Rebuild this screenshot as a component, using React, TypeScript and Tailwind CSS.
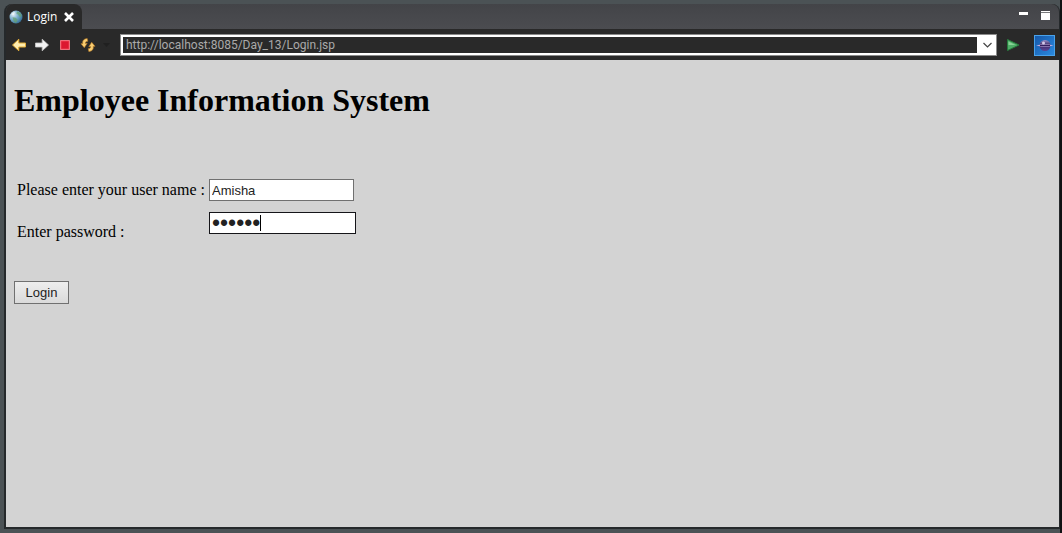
import { useState } from "react";

function GlobeIcon() {
  return (
    <svg width="14" height="14" viewBox="0 0 14 14" aria-hidden="true">
      <defs>
        <radialGradient id="sea" cx="0.3" cy="0.3" r="0.8">
          <stop offset="0" stopColor="#e8f1f6" />
          <stop offset="0.45" stopColor="#7db0cf" />
          <stop offset="1" stopColor="#2f6890" />
        </radialGradient>
      </defs>
      <circle cx="7" cy="7" r="6.5" fill="url(#sea)" />
      <path d="M8 1.2l3 1.3 1.6 2.8-.4 1.7-2-.6-1-1.9-1.8-.4zM3.5 7.2l3.2.5 1.8 1.8-.7 2.6-1.4 1L4.6 11z" fill="#64a06a" opacity="0.7" />
      <path d="M2.3 4.8C3 3 4.300 2.200 6 2L4.900 4.600z" fill="#f4f9fb" opacity="0.8" />
    </svg>
  );
}

function ArrowIcon({ forward = false }: { forward?: boolean }) {
  return (
    <svg width="16" height="16" viewBox="0 0 16 16" aria-hidden="true">
      {forward ? (
        <path d="M1.5 6h6.700V2.200L14.500 8l-6.300 5.800V10H1.500z" fill="#f3f3f3" stroke="#c9c9c9" strokeWidth="0.8" />
      ) : (
        <path d="M14.500 6H7.800V2.200L1.500 8l6.300 5.800V10h6.700z" fill="#ffedb0" stroke="#e4ad36" strokeWidth="1" />
      )}
    </svg>
  );
}

function StopIcon() {
  return (
    <svg width="12" height="12" viewBox="0 0 12 12" aria-hidden="true">
      <rect x="1" y="1" width="10" height="10" rx="1" fill="#f4a1a7" />
      <rect x="2" y="2" width="8" height="8" fill="#dc1830" stroke="#ec3f50" />
    </svg>
  );
}

function RefreshIcon() {
  return (
    <svg width="16" height="16" viewBox="0 0 16 16" aria-hidden="true">
      <g fill="#f8cd72" stroke="#b87a22" strokeWidth="0.6" strokeLinejoin="round">
        <path d="M7.200 1.500C4 1.800 2.200 3.600 2.800 6.600L1 6.700l3.300 4L7.200 6.300 5.400 6.400C5.300 5 6 4.400 7.800 4.300z" />
        <path d="M8.800 14.500c3.200-.3 5-2.100 4.400-5.100l1.800-.1-3.300-4-2.900 4.400 1.800-.1c.1 1.400-.6 2-2.400 2.100z" />
      </g>
    </svg>
  );
}

function EclipseIcon() {
  return (
    <svg width="21" height="21" viewBox="0 0 21 21" aria-hidden="true">
      <defs>
        <linearGradient id="tile" x1="0" y1="0" x2="1" y2="1">
          <stop offset="0" stopColor="#1557a8" />
          <stop offset="1" stopColor="#2b8be0" />
        </linearGradient>
        <linearGradient id="ball" x1="0" y1="0" x2="0" y2="1">
          <stop offset="0" stopColor="#9b8fc6" />
          <stop offset="0.45" stopColor="#3c2b68" />
          <stop offset="1" stopColor="#5a4496" />
        </linearGradient>
      </defs>
      <rect x="0.5" y="0.5" width="20" height="20" fill="url(#tile)" stroke="#49a2ea" />
      <circle cx="11" cy="10.5" r="5.5" fill="url(#ball)" />
      <path d="M2 10.500L7 9.500h8l4.500 1-4.500 1H7z" fill="#c3aee0" />
      <path d="M6 10.500h10" stroke="#34205f" />
      <circle cx="9.500" cy="8" r="1.500" fill="#d5cbea" />
    </svg>
  );
}

export default function App() {
  const [user, setUser] = useState("Amisha");
  const [password, setPassword] = useState("secret");
  const [url, setUrl] = useState("http://localhost:8085/Day_13/Login.jsp");

  return (
    <div className="flex h-screen flex-col border-r-2 border-[#101113] bg-[#4b5255] pt-1 pb-1 pl-1">
      <div className="flex min-h-0 flex-1 flex-col rounded-t-lg border-r border-b-2 border-l-2 border-[#25292b] bg-[#292929]">
        <header className="flex h-[26px] shrink-0 items-stretch justify-between rounded-t-lg border-b border-[#292929] bg-linear-to-b from-[#434448] to-[#4b4c50]">
          <div className="flex w-[76px] items-center gap-1 rounded-t-lg bg-[#292929] pl-[3px] font-['Open_Sans',sans-serif] text-xs text-white">
            <GlobeIcon />
            <span className="w-8">Login</span>
            <button type="button" aria-label="Close tab">
              <svg width="12" height="12" viewBox="0 0 12 12" aria-hidden="true">
                <path d="M2 2l8 8M10 2l-8 8" stroke="#fff" strokeWidth="2.6" />
              </svg>
            </button>
          </div>
          <div className="flex items-start gap-3 pt-1.5 pr-2">
            <button type="button" aria-label="Minimize">
              <svg width="11" height="12" viewBox="0 0 11 12" aria-hidden="true">
                <rect x="1" y="2" width="9" height="3" fill="#fff" />
              </svg>
            </button>
            <button type="button" aria-label="Maximize">
              <svg width="10" height="12" viewBox="0 0 10 12" aria-hidden="true">
                <path d="M0 1h9v9H0z" fill="#fff" />
                <path d="M0 2.500h9" stroke="#77787b" />
              </svg>
            </button>
          </div>
        </header>

        <nav className="flex h-[30px] shrink-0 items-center bg-[#292929] pr-1 pl-[5px]">
          <div className="flex w-[109px] items-center gap-[7px]">
            <button type="button" aria-label="Back"><ArrowIcon /></button>
            <button type="button" aria-label="Forward"><ArrowIcon forward /></button>
            <button type="button" aria-label="Stop" className="px-0.5"><StopIcon /></button>
            <button type="button" aria-label="Refresh"><RefreshIcon /></button>
            <svg width="7" height="4" viewBox="0 0 7 4" aria-hidden="true">
              <path d="M0 0h7L3.500 4z" fill="#202020" />
            </svg>
          </div>
          <div className="flex h-[22px] flex-1 border border-[#8b8b8b] bg-white p-0.5">
            <input
              aria-label="Address"
              value={url}
              onChange={(e) => setUrl(e.target.value)}
              className="min-w-0 flex-1 bg-[#292929] pl-[3px] font-['Roboto',sans-serif] text-xs text-[#aaaaaa] outline-none"
            />
            <button type="button" aria-label="Address history" className="flex w-[17px] items-center justify-center pl-1">
              <svg width="9" height="6" viewBox="0 0 9 6" aria-hidden="true">
                <path d="M.5 1l4 4 4-4" fill="none" stroke="#444" strokeWidth="1.2" />
              </svg>
            </button>
          </div>
          <button type="button" aria-label="Go" className="ml-[9px]">
            <svg width="14" height="14" viewBox="0 0 14 14" aria-hidden="true">
              <path d="M1.500 1.500L13 7 1.500 12.500z" fill="#4fae68" stroke="#267b3c" />
              <path d="M2.500 3.500l7 3.500H2.500z" fill="#89d296" />
            </svg>
          </button>
          <button type="button" aria-label="Open in Eclipse" className="ml-3.5"><EclipseIcon /></button>
        </nav>

        <main className="min-h-0 flex-1 overflow-hidden bg-[#d3d3d3] px-2 pt-5 font-['Liberation_Serif',serif] text-base text-black">
          <h1 className="text-[32px] leading-10 font-bold">Employee Information System</h1>
          <form onSubmit={(e) => e.preventDefault()} className="pt-[58px]">
            <div className="grid grid-cols-[192px_1fr] gap-x-[3px] gap-y-[10px]">
              <label htmlFor="user" className="pl-[3px] leading-6">Please enter your user name :</label>
              <input
                id="user"
                value={user}
                onChange={(e) => setUser(e.target.value)}
                className="mt-px h-[22px] w-[145px] border border-[#707070] bg-white px-0.5 font-['Liberation_Sans',sans-serif] text-[13px] text-[#222222] outline-none"
              />
              <label htmlFor="password" className="self-end pl-[3px] leading-6">Enter password :</label>
              <div className="relative h-8 w-[147px]">
                <input
                  id="password"
                  type="password"
                  value={password}
                  onChange={(e) => setPassword(e.target.value)}
                  className="block h-[22px] w-full border border-[#151519] bg-white px-0.5 font-['Liberation_Sans',sans-serif] text-[23px] leading-5 text-[#222222] outline-none"
                />
                <span className="absolute top-[3px] left-[51px] h-4 w-px bg-black" />
              </div>
            </div>
            <button
              type="submit"
              className="mt-[37px] h-[23px] w-[55px] border border-[#707070] bg-linear-to-b from-[#eeeeee] to-[#dadada] font-['Liberation_Sans',sans-serif] text-[13px] leading-5 text-[#222222]"
            >
              Login
            </button>
          </form>
        </main>
      </div>
    </div>
  );
}
